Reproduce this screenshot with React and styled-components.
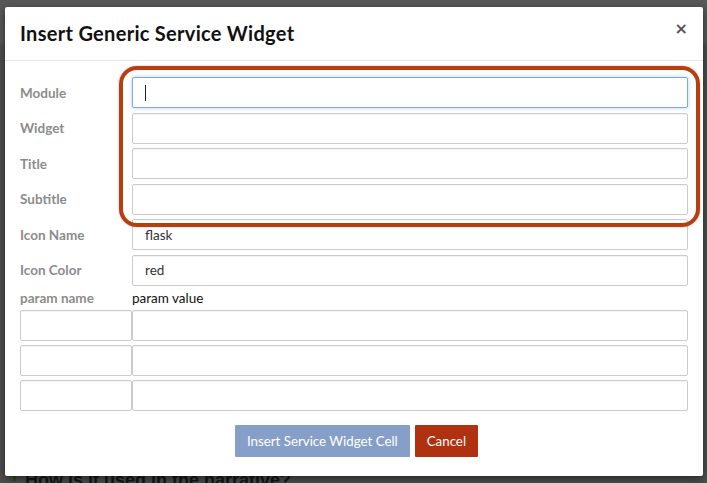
import React from "react"
import styled, { createGlobalStyle } from "styled-components"

const GlobalStyle = createGlobalStyle`
    html, body {
        margin: 0;
        padding: 0;
        background: #4e4e4e;
        font-family: Lato, "Open Sans", "Liberation Sans", sans-serif;
    }
    * { box-sizing: border-box; }
`

const paramRows = [0, 1, 2]

const fields = [
    { label: "Module", value: "", focused: true },
    { label: "Widget", value: "" },
    { label: "Title", value: "" },
    { label: "Subtitle", value: "" },
    { label: "Icon Name", value: "flask" },
    { label: "Icon Color", value: "red" },
]

const App = () => {
    return (
        <Page>
            <GlobalStyle />
            <PageTop />
            <PageBody>
                <BehindHeading>How is it used in the narrative?</BehindHeading>
            </PageBody>
            <Modal>
                <Header>
                    <Title>Insert Generic Service Widget</Title>
                    <Close>×</Close>
                </Header>
                <Body>
                    <FieldGrid>
                        {fields.map(f => (
                            <React.Fragment key={f.label}>
                                <Label>{f.label}</Label>
                                <Input focused={f.focused}>
                                    {f.focused ? <Caret /> : f.value}
                                </Input>
                            </React.Fragment>
                        ))}
                        <Label>param name</Label>
                        <ParamHead>param value</ParamHead>
                    </FieldGrid>
                    <ParamGrid>
                        {paramRows.map(i => (
                            <React.Fragment key={i}>
                                <Input />
                                <Input />
                            </React.Fragment>
                        ))}
                    </ParamGrid>
                    <Footer>
                        <Button primary>Insert Service Widget Cell</Button>
                        <Button>Cancel</Button>
                    </Footer>
                </Body>
                <Highlight />
            </Modal>
        </Page>
    )
}

export default App

const Page = styled.div`
    position: relative;
    width: 707px;
    height: 483px;
    overflow: hidden;
    background: #4e4e4e;
`
const PageTop = styled.div`
    height: 46px;
    background: #585858;
    border-bottom: 2px solid #515151;
`
const PageBody = styled.div`
    height: 435px;
    padding: 424px 0 0 9px;
    border-left: 3px solid #2f4a22;
    margin-left: 13px;
`
const BehindHeading = styled.div`
    font-family: "Liberation Sans", sans-serif;
    font-weight: 700;
    font-size: 18px;
    line-height: 20px;
    color: #161616;
`
const Modal = styled.div`
    position: absolute;
    left: 5px;
    top: 7px;
    width: 698px;
    height: 469px;
    background: #fff;
    border-radius: 2px;
    box-shadow: 0 3px 9px rgba(0, 0, 0, 0.5);
`
const Header = styled.div`
    height: 54px;
    display: flex;
    align-items: center;
    justify-content: space-between;
    padding: 0 15px 2px 15px;
    border-bottom: 1px solid #e5e5e5;
`
const Title = styled.div`
    font-size: 20px;
    font-weight: 700;
    color: #111;
    letter-spacing: 0.3px;
`
const Close = styled.div`
    font-family: "DejaVu Sans", sans-serif;
    font-size: 16px;
    font-weight: 700;
    color: #555;
    line-height: 1;
    margin-top: -8px;
`
const Body = styled.div`
    padding: 16px 15px 18px 15px;
`
const FieldGrid = styled.div`
    display: grid;
    grid-template-columns: 112px 1fr;
    row-gap: 4.5px;
    align-items: center;
`
const Label = styled.div`
    font-size: 13.5px;
    font-weight: 700;
    color: #8c8c8c;
`
const ParamHead = styled.div`
    font-size: 13.5px;
    color: #111;
`
const Input = styled.div`
    height: 31px;
    display: flex;
    align-items: center;
    padding: 0 12px;
    font-size: 13.5px;
    color: #333;
    background: #fff;
    border: 1px solid ${p => (p.focused ? "#7ea6e0" : "#cccccc")};
    border-radius: 2px;
    box-shadow: ${p => (p.focused
        ? "0 0 4px rgba(102, 150, 233, 0.45)"
        : "inset 0 1px 1px rgba(0, 0, 0, 0.05)")};
`
const Caret = styled.span`
    width: 1px;
    height: 16px;
    background: #222;
`
const ParamGrid = styled.div`
    display: grid;
    grid-template-columns: 112px 1fr;
    row-gap: 4px;
    margin-top: 4px;
`
const Footer = styled.div`
    display: flex;
    justify-content: center;
    gap: 5px;
    margin-top: 14px;
    padding-left: 5px;
`
const Button = styled.button`
    height: 32px;
    padding: 0 12px;
    border: none;
    border-radius: 1px;
    font-family: inherit;
    font-size: 13.3px;
    color: #fff;
    background: ${p => (p.primary ? "#869fc8" : "#b0310f")};
`
const Highlight = styled.div`
    position: absolute;
    left: 114px;
    top: 59px;
    width: 581px;
    height: 161px;
    border: 4px solid #b63e10;
    border-radius: 18px;
    box-shadow: 0 0 2px rgba(120, 40, 10, 0.4);
    pointer-events: none;
`
